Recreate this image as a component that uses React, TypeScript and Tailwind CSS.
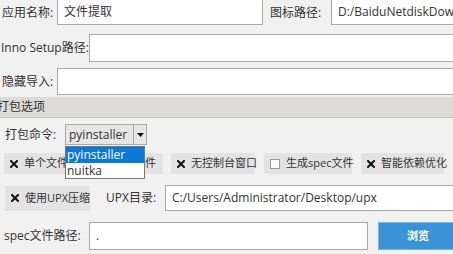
import type { ReactNode } from "react";

const font = { fontFamily: '"Segoe UI", "Open Sans", "Noto Sans CJK SC", sans-serif' };

function Cross() {
  return (
    <svg width="8" height="8" viewBox="0 0 8 8" className="shrink-0">
      <path d="M1 1 L7 7 M7 1 L1 7" stroke="#111" strokeWidth="2" strokeLinecap="square" />
    </svg>
  );
}

function Chip({ checked, children, className }: { checked: boolean; children: ReactNode; className: string }) {
  return (
    <div className={`flex h-[21px] items-center gap-[6px] bg-[#e3e3e3] pl-[6px] text-[11px] text-[#333] ${className}`}>
      {checked ? <Cross /> : <span className="h-[10px] w-[10px] shrink-0 border border-[#9a9a9a] bg-white" />}
      <span className="whitespace-nowrap">{children}</span>
    </div>
  );
}

function Field({ value, className }: { value?: string; className: string }) {
  return (
    <div className={`flex items-center overflow-hidden whitespace-nowrap border border-[#a8a8a8] bg-white pl-[6px] text-[12px] text-[#333] ${className}`}>
      {value}
    </div>
  );
}

export default function App() {
  return (
    <div className="relative h-[254px] w-[453px] overflow-hidden bg-[#f1f1f1] text-[12px] text-[#333]" style={font}>
      {/* row 1 */}
      <div className="flex h-[26px] items-center">
        <span className="w-[57px] shrink-0 pl-[2px]">应用名称:</span>
        <Field value="文件提取" className="h-[25px] w-[206px] shrink-0 self-start border-t-0" />
        <span className="ml-[7px] w-[61px] shrink-0">图标路径:</span>
        <Field value="D:/BaiduNetdiskDownload" className="h-[25px] w-[140px] shrink-0 self-start border-t-0" />
      </div>

      {/* row 2 */}
      <div className="mt-[8px] flex h-[28px] items-center">
        <span className="w-[89px] shrink-0 pl-[1px]">Inno Setup路径:</span>
        <Field className="h-[28px] w-[380px] shrink-0" />
      </div>

      {/* row 3 */}
      <div className="mt-[6px] flex h-[27px] items-center">
        <span className="w-[57px] shrink-0 pl-[2px]">隐藏导入:</span>
        <Field className="h-[27px] w-[410px] shrink-0" />
      </div>

      {/* section header */}
      <div className="mt-[2px] flex h-[21px] items-center border-b border-[#c9c8c5] bg-[#dcdbd8]">
        <span className="ml-[-3px]">打包选项</span>
      </div>

      {/* pack command */}
      <div className="mt-[6px] flex h-[21px] items-center">
        <span className="w-[65px] shrink-0 pl-[5px]">打包命令:</span>
        <div className="flex h-[21px] w-[82px] items-stretch border border-[#a8a8a8] bg-[#e6e6e6]">
          <span className="flex flex-1 items-center pl-[3px] text-[12px]">pyinstaller</span>
          <span className="flex w-[13px] items-center justify-center border-l border-[#a8a8a8]">
            <svg width="7" height="4" viewBox="0 0 7 4">
              <path d="M0 0 H7 L3.5 4 Z" fill="#111" />
            </svg>
          </span>
        </div>
      </div>

      {/* options */}
      <div className="mt-[8px] flex items-center">
        <Chip checked className="ml-[4px] w-[159px]">单个文件打包无需依赖文件</Chip>
        <Chip checked className="ml-[8px] w-[84px]">无控制台窗口</Chip>
        <Chip checked={false} className="ml-[9px] w-[88px]">生成spec文件</Chip>
        <Chip checked className="ml-[9px] w-[83px]">智能依赖优化</Chip>
      </div>

      {/* upx */}
      <div className="mt-[11px] flex h-[26px] items-center">
        <Chip checked className="ml-[5px] h-[25px] w-[85px]">使用UPX压缩</Chip>
        <span className="ml-[16px] w-[59px] shrink-0">UPX目录:</span>
        <Field value="C:/Users/Administrator/Desktop/upx" className="h-[26px] w-[300px] shrink-0" />
      </div>

      {/* spec */}
      <div className="mt-[11px] flex h-[28px] items-center">
        <span className="w-[89px] shrink-0 pl-[4px]">spec文件路径:</span>
        <Field value="." className="h-[28px] w-[279px] shrink-0" />
        <button className="ml-[10px] flex h-[28px] w-[80px] shrink-0 items-center justify-center border border-[#79b6e3] bg-[#3a93d6] text-[11px] font-bold text-white">
          浏览
        </button>
      </div>

      {/* dropdown popup */}
      <div className="absolute left-[65px] top-[146px] w-[80px] border border-[#767676] bg-white text-[12px]">
        <div className="flex h-[16px] items-center bg-[#0a78d7] pl-[1px] text-white">pyinstaller</div>
        <div className="flex h-[15px] items-center pl-[1px]">nuitka</div>
      </div>
    </div>
  );
}
